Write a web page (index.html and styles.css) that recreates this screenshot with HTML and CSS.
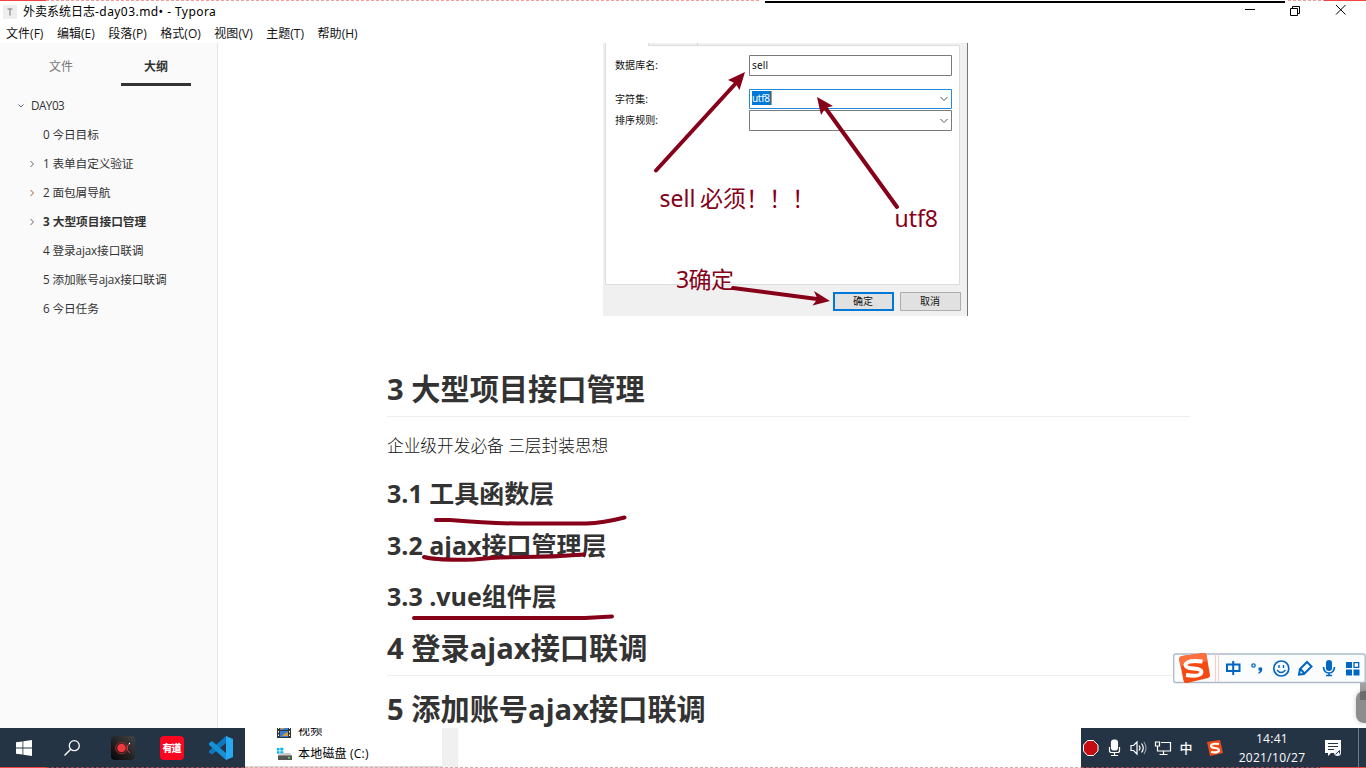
FILE: index.html
```html
<!DOCTYPE html>
<html lang="zh-CN">
<head>
<meta charset="utf-8">
<title>外卖系统日志-day03.md• - Typora</title>
<link rel="stylesheet" href="styles.css">
</head>
<body>
<div class="screen">
  <header class="titlebar">
    <svg class="app-icon" width="14" height="14" viewBox="0 0 14 14"><rect width="14" height="14" rx="1" fill="#eeeeee"/><path d="M4.500 4h5M7 4v6.500" stroke="#777" stroke-width="1" fill="none"/></svg>
    <span class="title">外卖系统日志<span class="title-latin">-day03.md• - Typora</span></span>
    <svg class="window-buttons" width="106" height="14" viewBox="0 0 106 14" fill="none" stroke="#000" stroke-width="1"><path d="M0 6.500h10M45.500 5.500h7v7h-7zM47.500 5.500v-2h7v7h-2M91 2l9.500 9.500M100.500 2L91 11.500"/></svg>
  </header>
  <nav class="menubar">
    <span>文件(F)</span><span>编辑(E)</span><span>段落(P)</span><span>格式(O)</span><span>视图(V)</span><span>主题(T)</span><span>帮助(H)</span>
  </nav>
  <div class="workspace">
    <aside class="sidebar">
      <div class="tabs"><div class="tab">文件</div><div class="tab active">大纲</div></div>
      <ul class="outline">
        <li class="root"><svg class="chev" width="8" height="8" viewBox="0 0 8 8"><path d="M1.500 2.500L4 5l2.500-2.500"/></svg>DAY03</li>
        <li><i class="chev"></i>0 今日目标</li>
        <li><svg class="chev" width="8" height="8" viewBox="0 0 8 8"><path d="M2.500 1L5.500 4l-3 3"/></svg>1 表单自定义验证</li>
        <li><svg class="chev warm" width="8" height="8" viewBox="0 0 8 8"><path d="M2.500 1L5.500 4l-3 3"/></svg>2 面包屑导航</li>
        <li class="current"><svg class="chev" width="8" height="8" viewBox="0 0 8 8"><path d="M2.500 1L5.500 4l-3 3"/></svg>3 大型项目接口管理</li>
        <li><i class="chev"></i>4 登录ajax接口联调</li>
        <li><i class="chev"></i>5 添加账号ajax接口联调</li>
        <li><i class="chev"></i>6 今日任务</li>
      </ul>
    </aside>
    <main class="editor">
      <svg class="figure" width="365" height="273" viewBox="603 43 365 273">
        <path fill="#f0f0f0" d="M603 43h365v273H603z"/>
        <path fill="#fff" stroke="#dcdcdc" d="M605.500 42v242.500h354V45.500H648.500V42z"/>
        <path d="M697.500 43v2" stroke="#d5d5d5"/>
        <path d="M967.500 43v273" stroke="#777"/>
        <g fill="#fff" stroke="#7a7a7a"><path d="M749.500 55.500h202v20h-202z"/><path d="M749.500 110.500h202v20h-202z"/><path stroke="#2688dc" d="M749.500 89.500h202v19h-202z"/></g>
        <path fill="#0078d7" d="M752 91h19v14h-19z"/>
        <path d="M771.500 91v14" stroke="#e08a30"/>
        <path d="M940.500 97l3.500 3.500 3.500-3.500M940.500 119l3.500 3.500 3.500-3.500" stroke="#555" fill="none"/>
        <g class="form-text"><text x="615" y="69" textLength="43">数据库名:</text><text x="615" y="102.500" textLength="33">字符集:</text><text x="615" y="124" textLength="43">排序规则:</text><text x="752" y="69" textLength="16">sell</text><text x="752" y="102" textLength="18" fill="#fff">utf8</text></g>
        <path fill="#e1e1e1" stroke="#0078d7" stroke-width="2" d="M834 293h59v17h-59z"/>
        <path fill="#e1e1e1" stroke="#adadad" d="M900.500 292.500h60v18h-60z"/>
        <g class="form-text"><text x="853" y="305">确定</text><text x="920" y="305">取消</text></g>
        <g stroke="#850018" stroke-width="4" stroke-linecap="round"><path d="M656 170.500L737 82M897 207L824 106M733 288L817 299"/></g>
        <g fill="#850018"><path d="M745 72L739.500 90 735.500 83.500 728 80z"/><path d="M817 97L833 106 825.500 108 821 115z"/><path d="M830 301L812.500 305.500 817.500 299 814 291z"/></g>
        <g class="note"><text x="659.500" y="207" textLength="36">sell</text><text x="700" y="207">必须！！！</text><text x="894.500" y="227" textLength="43.500">utf8</text><text x="676" y="288" textLength="58">3确定</text></g>
      </svg>
      <h2 class="first">3 大型项目接口管理</h2>
      <p>企业级开发必备 三层封装思想</p>
      <h3>3.1 工具函数层</h3>
      <h3>3.2 ajax接口管理层</h3>
      <h3>3.3 .vue组件层</h3>
      <h2>4 登录ajax接口联调</h2>
      <h2>5 添加账号ajax接口联调</h2>
    </main>
  </div>
  <footer class="taskbar">
    <div class="launchers">
      <svg width="16" height="16" viewBox="0 0 16 16" fill="#fff"><path d="M0 2.300L6.500 1.400v6.200H0zM7.300 1.200L16 0v7.600H7.300zM0 8.400h6.500v6.200L0 13.700zM7.300 8.400H16V16l-8.700-1.200z"/></svg>
      <svg width="16" height="16" viewBox="0 0 16 16" fill="none" stroke="#fff" stroke-width="1.300"><circle cx="10.300" cy="5.700" r="5"/><path d="M6.700 9.300L.5 15.500"/></svg>
      <svg width="24" height="24" viewBox="0 0 24 24"><defs><linearGradient id="rec" x1="0" y1="1" x2="1" y2="0"><stop stop-color="#050505"/><stop offset="1" stop-color="#444"/></linearGradient></defs><rect width="24" height="24" rx="4" fill="url(#rec)"/><circle cx="10.500" cy="12" r="4.300" fill="#ee3a3e"/><circle cx="10.500" cy="12" r="5.800" fill="none" stroke="#a4282c"/><path d="M19 7.500q-3 1.500-3 4.500t3 5" fill="none" stroke="#d8383d"/><circle cx="18.500" cy="7.500" r=".7" fill="#fff"/></svg>
      <svg width="24" height="24" viewBox="0 0 24 24"><rect width="24" height="24" rx="4" fill="#fb0520"/><text x="2.500" y="15.500" textLength="19" class="youdao">有道</text></svg>
      <svg width="24" height="24" viewBox="0 0 24 24"><path fill="#0d78bd" d="M17 0v7L3 18.500 0 16.500V15L17 0z"/><path fill="#168fd5" d="M0 7l3-2 14 12v7L0 9z"/><path fill="#29a9f2" d="M17 0l7 3v18l-7 3z"/></svg>
    </div>
    <div class="explorer">
      <div class="places">
        <div class="place cut"><svg width="15" height="14" viewBox="0 0 15 14"><path fill="#333" d="M0 0h14v14H0z"/><path fill="#377bd5" d="M3 0h8v6H3zM3 7h8v6H3z"/><path fill="#d49d43" d="M3 3l3-2 2 3-4 2zM7 10l4-2v4H5z"/><path d="M1.500 0v14M12.500 0v14" stroke="#fff" stroke-dasharray="1.500 2"/></svg><span>视频</span></div>
        <div class="place"><svg width="15" height="14" viewBox="0 0 15 14"><path fill="#00b5ef" d="M0 1h2.500v2.500H0zM3.300.7h3v2.800h-3zM0 4.300h2.500v2.500H0zM3.300 4.300h3v3h-3z"/><path fill="#c8c8c8" d="M3 6h10l2 3H1z"/><path fill="#555" d="M1 8.500h14V13H1z"/><path fill="#4bed4b" d="M11 10h2v1.500h-2z"/></svg><span>本地磁盘 (C:)</span></div>
      </div>
      <div class="explorer-scroll"></div>
    </div>
    <div class="tray">
      <svg class="status" width="140" height="20" viewBox="1083 738 140 20">
        <path d="M1087.500 740.500h6l4.500 4.500v6l-4.500 4.500h-6L1083.500 751v-6z" fill="#c40c12" stroke="#fff"/>
        <g fill="none" stroke="#fff" stroke-width="1.200"><rect x="1111.500" y="740" width="6" height="10" rx="2.500" fill="#fff"/><path d="M1109.500 747v3.500q0 2 2 2h6q2 0 2-2V747M1114.500 753v2.500M1111 755.500h7"/><path d="M1131 745.500h2.500l3.500-3.500v12l-3.500-3.500H1131zM1139 745.500q2 2.500 0 5M1141.500 743.500q3.500 4.500 0 9"/><path d="M1144 742q4 6 0 12" stroke="#8d98a4"/><path d="M1161 742.500h9.500v8.500h-13v-3M1163.500 751v3.500M1159.500 754.500h8M1155.500 742h4v4h-4zM1157.500 746v3"/></g>
        <text x="1179.500" y="752.500" class="tray-zh">中</text>
        <path fill="#f04b16" d="M1207 742l13-2 3 13-13 3z"/><path d="M1219 744q-8-1-8 2 0 1.500 4 2t4 2.500q0 2.500-8 1.500" fill="none" stroke="#fff" stroke-width="2.200"/>
      </svg>
      <div class="clock"><span>14:41</span><span>2021/10/27</span></div>
      <svg class="notice" width="17" height="17" viewBox="0 0 17 17"><path fill="#fff" d="M0 0h16v13H6l-3 3v-3H0z"/><path d="M3 3.500h10M3 6.500h10M3 9.500h6" stroke="#253445" stroke-width="1.200"/><circle cx="12.500" cy="12.500" r="3.500" fill="#eef2f5"/><path d="M10.500 14.500l4-4v3" fill="none" stroke="#253445"/></svg>
      <div class="desktop-edge"></div>
    </div>
  </footer>

  <svg class="strokes" width="230" height="110" viewBox="408 512 230 110"><g fill="none" stroke="#850018" stroke-width="4" stroke-linecap="round" stroke-linejoin="round"><path d="M436 520h14Q490 523.500 520 523.500h66Q603 523 624.500 517.500"/><path d="M424 557q13 3.500 50 2.500 22-2.500 50-2.500 28 0 60-2.500"/><path d="M414 618h171l27-1.500"/></g></svg>
  <div class="scroll-thumb"></div>
  <div class="float-handle"></div>
  <svg class="ime" width="194" height="31" viewBox="1173 653 194 31">
    <rect x="1173.700" y="654" width="191.500" height="28.500" rx="2" fill="#fbfcfd" stroke="#aebac8" stroke-width="1.300"/>
    <path fill="#f34a13" d="M1182 656l22-3q2 0 2.500 2l3.500 20q.5 2-2 3l-21 5q-3 .5-3.500-2.500l-4-20q-.5-4 2.500-4.500z"/>
    <path fill="#fb703c" d="M1182 656l22-3q2 0 2.500 2l1 6-27 5-1.500-6q-.5-3.500 3-4z"/>
    <path d="M1202.500 661.500q-16-2-17 3.500 0 3 8 3.500 8 .5 8 3.500-1 5.500-15.500 3" fill="none" stroke="#fff" stroke-width="4"/>
    <path d="M1215.500 654v28M1218.500 654v28" stroke="#f9cdbf"/>
    <path d="M1227 664.500h12.500v6.500H1227zM1233.200 661v14" fill="none" stroke="#0066c3" stroke-width="2"/>
    <circle cx="1253.500" cy="665.500" r="1.700" fill="none" stroke="#0066c3" stroke-width="1.300"/><path d="M1258.500 667.500h3.500q1.200 4.500-3.500 6.500v-1.500q1.500-1 1.500-2h-1.500z" fill="#0066c3"/>
    <g fill="none" stroke="#0066c3" stroke-width="1.700"><circle cx="1281.300" cy="668.500" r="7.500"/><path d="M1279 665v3M1283.500 665v3M1277 670q4 5 8.500 0" stroke-width="1.400"/><path d="M1299 674.500l1-5.500 7-7 4.500 4.500-7.500 7.500zM1300 668.500l4.500 5" stroke-width="2"/></g>
    <rect x="1326" y="660" width="6" height="11" rx="3" fill="#0066c3"/><path d="M1323.500 667q.5 6 5.500 6t5.500-6M1329 673v3M1326 675.500h6" fill="none" stroke="#0066c3" stroke-width="1.700"/>
    <path fill="#0066c3" d="M1346 662h6v6h-6zM1346 669.500h6v6h-6zM1353.500 669.500h6v6h-6z"/><path fill="none" stroke="#0066c3" stroke-width="1.300" d="M1354 662.700h4.700v4.700H1354z"/>
  </svg>
  <svg class="frame-lines" width="1366" height="768" viewBox="0 0 1366 768" fill="none">
    <path d="M46 .5h714M1198.500 .5" stroke="#f69a9a" stroke-dasharray="3 2"/>
    <path d="M1198 0" stroke="#f69a9a"/>
    <path d="M1288 .5h-90" stroke="none"/>
    <path d="M1288 .5h36" stroke="#f69a9a" stroke-dasharray="3 2"/>
    <path d="M0 .5h46M1324 .5h42M0 767.500h46M1320 767.500h46" stroke="#f04444"/>
    <path d="M46 767.500h199M1081 767.500h239" stroke="#a44252" stroke-dasharray="3 2"/>
    <path d="M245 767.500h836" stroke="#eda2a2" stroke-dasharray="3 2"/>
    <path d="M765 2h520" stroke="#000" stroke-width="2"/>
  </svg>
</div>
</body>
</html>
```
FILE: styles.css
```css
* { box-sizing: border-box; }
body { margin: 0; background: #fff; color: #333; font-family: "Open Sans", "Noto Sans CJK SC", sans-serif; }
svg { display: block; flex: none; }
.screen { position: relative; width: 1366px; height: 768px; overflow: hidden; display: flex; flex-direction: column; white-space: nowrap; }
.titlebar { height: 24px; display: flex; align-items: center; padding: 0 15px 0 3px; color: #000; font: 12px/24px "Noto Sans", "Noto Sans CJK SC", sans-serif; }
.title { margin-left: 6px; }
.title-latin { letter-spacing: .44px; }
.window-buttons { margin: -4px 0 0 auto; }
.menubar { height: 19px; display: flex; gap: 13.500px; padding-left: 6px; color: #111; font: 12px/20px "Open Sans", "Noto Sans CJK SC", sans-serif; }
.menubar span { letter-spacing: .03px; }
.workspace { height: 685px; display: flex; overflow: hidden; }
.sidebar { width: 218px; flex: none; background: #fafafa; border-right: 1px solid #e6e6e6; }
.tabs { display: flex; padding: 0 26px; justify-content: space-between; height: 43px; font-size: 12px; line-height: 47px; }
.tab { width: 70px; text-align: center; color: #777; }
.tab.active { color: #333; font-weight: 700; border-bottom: 3px solid #333; }
.outline { list-style: none; margin: 5px 0 0; padding: 0; font-size: 11.700px; line-height: 29px; letter-spacing: -.13px; }
.outline li { display: flex; align-items: center; padding-left: 28px; height: 29px; }
.outline .root { padding-left: 17px; letter-spacing: -.5px; }
.chev { width: 8px; height: 8px; margin-right: 7px; fill: none; stroke: #667; }
.root .chev { margin-right: 6px; }
.warm { stroke: #a65b30; }
.outline .current { font-weight: 700; letter-spacing: 0; }
.editor { flex: 1; padding-left: 169px; }
.figure { margin-left: 216px; }
.form-text { font: 10px "Noto Sans", "Noto Sans CJK SC", sans-serif; fill: #111; }
.note { font: 23px "Noto Sans", "Noto Sans CJK SC", sans-serif; fill: #850018; }
h2, h3, p { margin: 0; width: 803px; }
h2 { height: 46px; margin-top: 15px; border-bottom: 1px solid #eee; font-size: 29.200px; line-height: 37px; }
h2.first { margin-top: 55px; }
p { font-size: 16.700px; font-weight: 300; color: #111; line-height: 26px; margin: 16px 0 19px; }
h3 { font-size: 25px; line-height: 30px; margin-bottom: 21.500px; }
h3 + h2 { margin-top: -3px; }
.taskbar { height: 40px; display: flex; }
.launchers { width: 245px; background: #253445; display: flex; align-items: center; padding-left: 16px; }
.launchers svg:nth-child(2) { margin-left: 32px; }
.launchers svg:nth-child(3) { margin-left: 31px; }
.launchers svg:nth-child(n+4) { margin-left: 25px; }
.youdao { font: 900 10px "Noto Sans CJK SC", sans-serif; fill: #fff; }
.explorer { width: 836px; display: flex; background: #fff; color: #000; overflow: hidden; }
.places { width: 197px; border-bottom: 2px solid #d9d9d9; font-size: 12px; letter-spacing: .2px; padding-left: 32px; }
.place { display: flex; height: 23px; align-items: center; gap: 6px; line-height: 23px; }
.place.cut { margin-top: -9px; }
.explorer-scroll { width: 17px; background: #f0f0f0; border-right: 1px solid #fafafa; }
.tray { width: 285px; background: #253445; display: flex; padding-left: 2px; align-items: center; color: #fff; }
.tray-zh { font: 500 13px "Noto Sans CJK SC", sans-serif; fill: #fff; }
.clock { width: 68px; margin-left: 15px; display: flex; flex-direction: column; text-align: center; font: 12px/19px "Open Sans", sans-serif; letter-spacing: .3px; }
.notice { margin-left: 19px; }
.desktop-edge { width: 1px; height: 40px; margin-left: 16px; background: #707b87; }
.strokes { position: absolute; left: 408px; top: 512px; }
.scroll-thumb { position: absolute; left: 1360px; top: 682px; width: 6px; height: 18px; background: #a0a0a0; }
.float-handle { position: absolute; left: 1356px; top: 691px; width: 20px; height: 32px; border-radius: 8px; background: rgba(80,80,80,.65); box-shadow: 0 0 5px rgba(0,0,0,.2); }
.ime { position: absolute; left: 1173px; top: 653px; }
.frame-lines { position: absolute; left: 0; top: 0; }
```
